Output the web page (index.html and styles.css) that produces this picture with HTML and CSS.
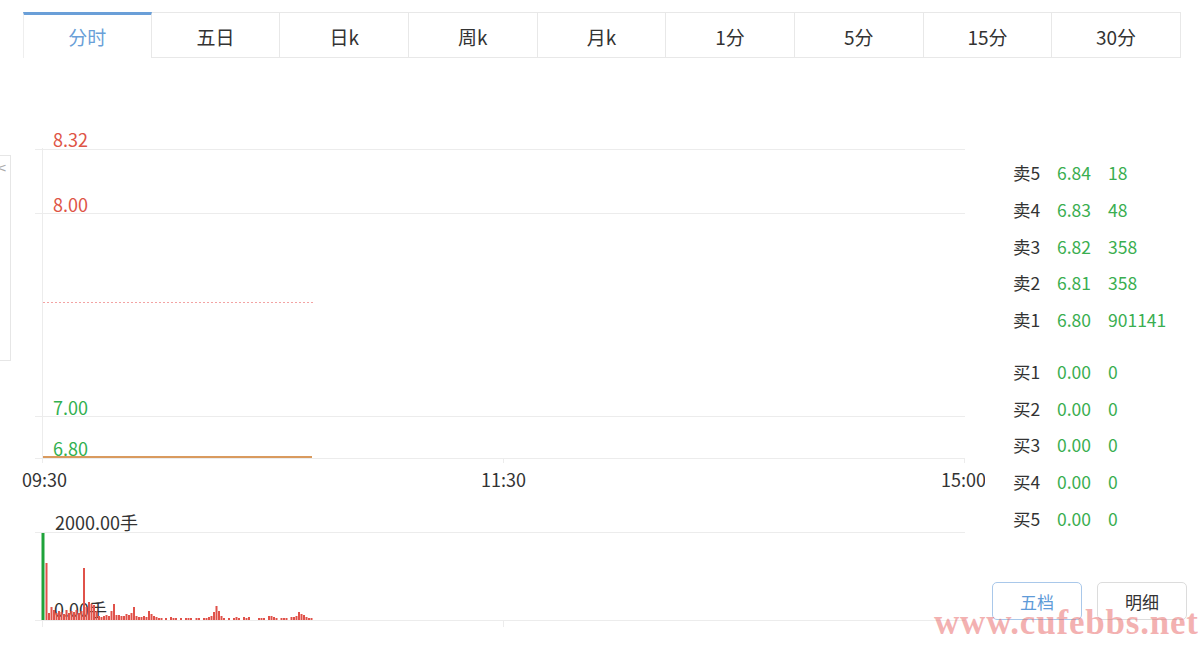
FILE: index.html
```html
<!DOCTYPE html>
<html lang="zh-CN">
<head>
<meta charset="utf-8">
<title>分时</title>
<link rel="stylesheet" href="styles.css">
</head>
<body>
<div class="page">
  <nav class="tabs">
    <div class="tab active">分时</div>
    <div class="tab">五日</div>
    <div class="tab">日k</div>
    <div class="tab">周k</div>
    <div class="tab">月k</div>
    <div class="tab">1分</div>
    <div class="tab">5分</div>
    <div class="tab">15分</div>
    <div class="tab">30分</div>
  </nav>
  <div class="main">
    <svg class="chart" width="985" height="587" viewBox="0 58 985 587">
      <!-- left partial panel -->
      <rect x="-2" y="155.5" width="12.5" height="205" fill="none" stroke="#e6e6e6"/>
      <text class="edge" x="-4" y="172">&lt;</text>
      <!-- price grid -->
      <g stroke="#ececec" stroke-width="1">
        <line x1="35" y1="149.5" x2="965" y2="149.5"/>
        <line x1="35" y1="213.5" x2="965" y2="213.5"/>
        <line x1="35" y1="416.5" x2="965" y2="416.5"/>
        <line x1="35" y1="458.5" x2="965" y2="458.5"/>
        <line x1="42.5" y1="148" x2="42.5" y2="458"/>
        <line x1="42.5" y1="459" x2="42.5" y2="463"/>
        <line x1="503.5" y1="459" x2="503.5" y2="463"/>
        <line x1="964.5" y1="459" x2="964.5" y2="463"/>
        <line x1="35" y1="532.5" x2="965" y2="532.5"/>
        <line x1="35" y1="620.5" x2="965" y2="620.5"/>
        <line x1="42.5" y1="621" x2="42.5" y2="627"/>
        <line x1="503.5" y1="621" x2="503.5" y2="627"/>
      </g>
      <line x1="43" y1="302.5" x2="313" y2="302.5" stroke="#f3a3a3" stroke-width="1" stroke-dasharray="2 2"/>
      <line x1="43" y1="457" x2="312" y2="457" stroke="#d99a5e" stroke-width="2"/>
      <text class="lbl up" x="53" y="147">8.32</text>
      <text class="lbl up" x="53" y="212">8.00</text>
      <text class="lbl down" x="53" y="415">7.00</text>
      <text class="lbl down" x="53" y="456">6.80</text>
      <text class="lbl time" x="22" y="487">09:30</text>
      <text class="lbl time" x="481" y="487">11:30</text>
      <text class="lbl time" x="941" y="487">15:00</text>
      <text class="lbl time" x="55" y="530">2000.00手</text>
      <text class="lbl time" x="54" y="617">0.00手</text>
      <!-- volume bars -->
      <line x1="43" y1="620" x2="43" y2="533" stroke="#1fa33a" stroke-width="3"/>
      <path stroke="#e0524a" stroke-width="2" fill="none" d="M46.5 620v-57M49 620v-7M51.5 620v-13M54 620v-10M56.5 620v-7M59 620v-9M61.5 620v-8M64 620v-6M66.5 620v-10M69 620v-7M71.5 620v-9M74 620v-8M76.5 620v-10M79 620v-7M81.5 620v-9M84 620v-52M86.5 620v-13M89 620v-18M91.5 620v-16M94 620v-15M96.5 620v-9M99 620v-4M101.5 620v-3M104 620v-4M106.5 620v-5M109 620v-4M111.5 620v-9M114 620v-16M116.5 620v-5M119 620v-5M121.5 620v-4M124 620v-4M126.5 620v-6M129 620v-5M131.5 620v-7M134 620v-13M136.5 620v-4M139 620v-3M141.5 620v-3M144 620v-4M146.5 620v-3M149 620v-9M151.5 620v-6M154 620v-4M156.5 620v-3M159 620v-2M161.5 620v-2M166 620v-2M171 620v-3M173.5 620v-2M176 620v-2M181 620v-2M186 620v-2M188.5 620v-2M191 620v-2M196.5 620v-2M199 620v-2M204 620v-2M206.5 620v-2M209 620v-3M211.5 620v-4M214 620v-8M216.5 620v-14M219 620v-9M221.5 620v-4M224 620v-2M229 620v-2M234 620v-2M236.5 620v-3M239 620v-2M244 620v-3M246.5 620v-2M249 620v-3M259 620v-2M261.5 620v-2M264 620v-2M269 620v-4M271.5 620v-4M274 620v-3M276.5 620v-2M281.5 620v-2M284 620v-2M286.5 620v-2M291.5 620v-3M294 620v-3M296.5 620v-4M299 620v-8M301.5 620v-6M304 620v-5M306.5 620v-3M309 620v-2M311.5 620v-2"/>
    </svg>
    <aside class="side">
      <div class="book">
        <div class="row"><span class="k">卖5</span><span class="p">6.84</span><span class="v">18</span></div>
        <div class="row"><span class="k">卖4</span><span class="p">6.83</span><span class="v">48</span></div>
        <div class="row"><span class="k">卖3</span><span class="p">6.82</span><span class="v">358</span></div>
        <div class="row"><span class="k">卖2</span><span class="p">6.81</span><span class="v">358</span></div>
        <div class="row"><span class="k">卖1</span><span class="p">6.80</span><span class="v">901141</span></div>
      </div>
      <div class="book buy">
        <div class="row"><span class="k">买1</span><span class="p">0.00</span><span class="v">0</span></div>
        <div class="row"><span class="k">买2</span><span class="p">0.00</span><span class="v">0</span></div>
        <div class="row"><span class="k">买3</span><span class="p">0.00</span><span class="v">0</span></div>
        <div class="row"><span class="k">买4</span><span class="p">0.00</span><span class="v">0</span></div>
        <div class="row"><span class="k">买5</span><span class="p">0.00</span><span class="v">0</span></div>
      </div>
      <div class="btns">
        <button class="btn on">五档</button>
        <button class="btn">明细</button>
      </div>
    </aside>
  </div>
  <div class="wm-cn">中财论坛</div>
  <div class="wm">www.cufebbs.net</div>
</div>
</body>
</html>
```
FILE: styles.css
```css
* { box-sizing: border-box; }
html, body { margin: 0; padding: 0; background: #fff; }
body {
  width: 1200px;
  height: 645px;
  overflow: hidden;
  font-family: "Noto Sans CJK SC", "Noto Sans", sans-serif;
  color: #333;
}
.page { position: relative; width: 1200px; height: 645px; }

.tabs {
  display: flex;
  padding: 12px 0 0 23px;
  height: 58px;
}
.tab {
  width: 128.67px;
  height: 46px;
  border: 1px solid #e8e8e8;
  border-left: none;
  display: flex;
  align-items: center;
  justify-content: center;
  padding-top: 2px;
  font-size: 19px;
  color: #333;
}
.tab.active {
  border-left: 1px solid #eeeeee;
  border-top: 3px solid #6a9fd8;
  border-bottom: none;
  color: #6a9fd8;
  padding-top: 0;
}

.main { display: flex; }
.chart { display: block; flex: none; }
.chart .lbl { font-family: "Noto Sans CJK SC", "Noto Sans", sans-serif; font-size: 18px; }
.chart .up { fill: #de5446; }
.chart .down { fill: #32b04f; }
.chart .time { fill: #333; }
.chart .edge { font-size: 13px; fill: #aaa; font-family: "DejaVu Sans", sans-serif; }

.side {
  flex: none;
  width: 215px;
  padding: 97px 0 0 28px;
  display: flex;
  flex-direction: column;
}
.book .row {
  display: flex;
  height: 36.75px;
  line-height: 36.75px;
  font-size: 17.5px;
  white-space: nowrap;
}
.book.buy { margin-top: 15px; }
.k { width: 44px; color: #333; }
.p { width: 51px; color: #3aae50; }
.v { color: #3aae50; }

.btns {
  display: flex;
  gap: 15px;
  margin: 44.6px 0 0 -21px;
}
.btn {
  width: 90px;
  height: 38px;
  border: 1px solid #dcdcdc;
  border-radius: 5px;
  background: #fff;
  font-family: "Noto Sans CJK SC", "Noto Sans", sans-serif;
  font-size: 17px;
  color: #333;
  padding: 0;
}
.btn.on { border-color: #a9c8ea; color: #5f9bd8; }

.wm {
  position: absolute;
  left: 934px;
  top: 603px;
  font-family: "Liberation Serif", serif;
  font-weight: bold;
  font-size: 35px;
  line-height: 40px;
  letter-spacing: 0.8px;
  color: rgba(232, 100, 100, 0.5);
  white-space: nowrap;
}
.wm-cn {
  position: absolute;
  left: 958px;
  top: 532px;
  font-size: 46px;
  line-height: 50px;
  font-style: italic;
  color: rgba(0, 0, 0, 0.025);
  letter-spacing: 4px;
  white-space: nowrap;
}
```
